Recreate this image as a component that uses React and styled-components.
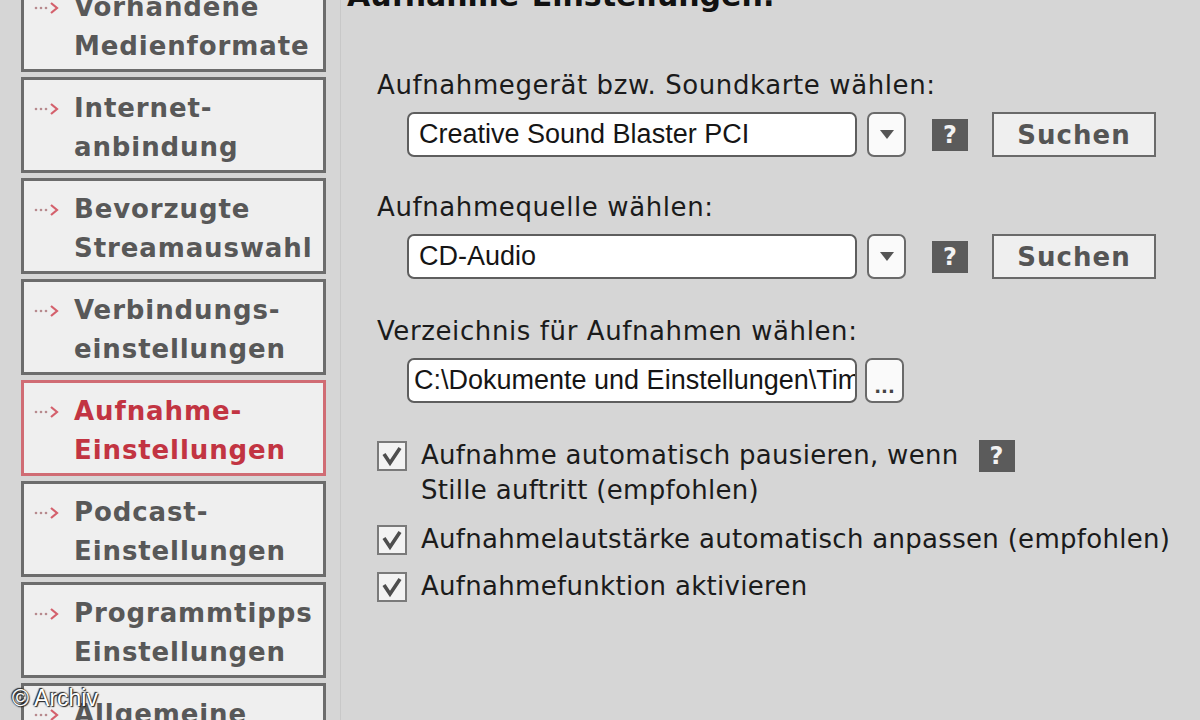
import React from "react";
import styled, { createGlobalStyle } from "styled-components";

const GlobalStyle = createGlobalStyle`
  html, body { margin: 0; padding: 0; }
  body {
    background: #d6d6d6;
    overflow: hidden;
    font-family: "DejaVu Sans", Verdana, sans-serif;
  }
`;

const Page = styled.div`
  position: relative;
  width: 1200px;
  height: 720px;
  overflow: hidden;
  display: flex;
  background: #d6d6d6;
`;

const Sidebar = styled.nav`
  width: 340px;
  flex: none;
  box-sizing: border-box;
  padding-left: 21px;
  margin-top: -24px;
  display: flex;
  flex-direction: column;
  gap: 5px;
`;

const NavItem = styled.div`
  width: 305px;
  height: 96px;
  flex: none;
  box-sizing: border-box;
  border: 3px solid ${(p) => (p.$active ? "#d06c74" : "#6c6c6c")};
  background: #efefef;
  display: flex;
  align-items: flex-start;
  padding: 9px 0 0 9px;
  gap: 13px;
`;

const NavText = styled.div`
  font-family: "DejaVu Sans", Verdana, sans-serif;
  font-weight: bold;
  font-size: 26px;
  line-height: 39px;
  letter-spacing: 0.9px;
  color: ${(p) => (p.$active ? "#c23442" : "#585858")};
  white-space: nowrap;
`;

const ArrowWrap = styled.span`
  flex: none;
  width: 28px;
  height: 39px;
  display: flex;
  align-items: center;
`;

const Arrow = () => (
  <ArrowWrap>
    <svg width="28" height="14" viewBox="0 0 28 14">
      <circle cx="3" cy="7" r="1.3" fill="#b78a8e" />
      <circle cx="8" cy="7" r="1.3" fill="#b78a8e" />
      <circle cx="13" cy="7" r="1.3" fill="#b78a8e" />
      <path d="M18 2 L24 7 L18 12" fill="none" stroke="#d4606c" strokeWidth="2.2" />
    </svg>
  </ArrowWrap>
);

const Main = styled.main`
  flex: 1;
  box-sizing: border-box;
  padding-left: 6px;
  border-left: 1px solid #c8c8c8;
  display: flex;
  flex-direction: column;
`;

const Heading = styled.h1`
  margin: -22px 0 0 0;
  font-family: "DejaVu Sans", Verdana, sans-serif;
  font-weight: bold;
  font-size: 30px;
  line-height: 36px;
  color: #111;
  white-space: nowrap;
`;

const Content = styled.div`
  padding-left: 30px;
  display: flex;
  flex-direction: column;
`;

const Label = styled.div`
  font-family: "DejaVu Sans", Verdana, sans-serif;
  font-size: 26px;
  line-height: 30px;
  letter-spacing: 0.6px;
  color: #1b1b1b;
  margin-top: ${(p) => p.$top}px;
  white-space: nowrap;
`;

const FieldRow = styled.div`
  display: flex;
  align-items: center;
  margin-top: ${(p) => p.$top}px;
  padding-left: 30px;
  height: 45px;
`;

const TextBox = styled.div`
  width: 450px;
  height: 45px;
  box-sizing: border-box;
  border: 2px solid #5e5e5e;
  border-radius: 7px;
  background: #fff;
  display: flex;
  align-items: center;
  padding-left: ${(p) => p.$pad || 10}px;
  overflow: hidden;
  font-family: "Liberation Sans", Arial, sans-serif;
  font-size: 27px;
  color: #151515;
  white-space: nowrap;
`;

const SmallButton = styled.div`
  width: 39px;
  height: 45px;
  box-sizing: border-box;
  border: 2px solid #6a6a6a;
  border-radius: 7px;
  background: #fafafa;
  margin-left: ${(p) => p.$gap || 10}px;
  display: flex;
  align-items: center;
  justify-content: center;
  flex: none;
`;

const HelpBadge = styled.div`
  width: 36px;
  height: 32px;
  background: #5b5b5b;
  color: #f2f2f2;
  font-family: "DejaVu Sans", Verdana, sans-serif;
  font-weight: bold;
  font-size: 24px;
  display: flex;
  align-items: center;
  justify-content: center;
  margin-left: ${(p) => p.$gap || 26}px;
  flex: none;
`;

const SearchButton = styled.div`
  width: 164px;
  height: 45px;
  box-sizing: border-box;
  border: 2px solid #6a6a6a;
  background: #efefef;
  margin-left: 24px;
  display: flex;
  align-items: center;
  justify-content: center;
  font-family: "DejaVu Sans", Verdana, sans-serif;
  font-weight: bold;
  font-size: 26px;
  letter-spacing: 1px;
  color: #555;
  flex: none;
`;

const CheckList = styled.div`
  display: flex;
  flex-direction: column;
  margin-top: 37px;
`;

const CheckRow = styled.div`
  display: flex;
  align-items: flex-start;
  margin-top: ${(p) => p.$top || 0}px;
  gap: 14px;
`;

const Box = styled.div`
  width: 30px;
  height: 30px;
  box-sizing: border-box;
  border: 2px solid #7a7a7a;
  background: #f3f3f3;
  flex: none;
  margin-top: 1px;
  display: flex;
  align-items: center;
  justify-content: center;
`;

const CheckText = styled.div`
  font-family: "DejaVu Sans", Verdana, sans-serif;
  font-size: 26px;
  line-height: 35px;
  letter-spacing: 0.3px;
  color: #1b1b1b;
  white-space: nowrap;
  margin-top: -2px;
`;

const Watermark = styled.div`
  position: absolute;
  left: 12px;
  bottom: 8px;
  font-family: "Liberation Sans", Arial, sans-serif;
  font-size: 23px;
  color: #fff;
  text-shadow: 0 0 2px #222, 1px 1px 1px #222, -1px -1px 1px #222;
`;

const Check = () => (
  <svg width="22" height="22" viewBox="0 0 22 22">
    <path d="M3 9 L9 18 L19 3" fill="none" stroke="#4e4e4e" strokeWidth="3.6" />
  </svg>
);

const DropArrow = () => (
  <svg width="14" height="9" viewBox="0 0 14 9">
    <path d="M0 0 L14 0 L7 9 Z" fill="#555" />
  </svg>
);

const Dots = styled.span`
  font-family: "DejaVu Sans", sans-serif;
  font-weight: bold;
  font-size: 18px;
  color: #444;
  margin-top: 12px;
`;

const navItems = [
  ["Vorhandene", "Medienformate"],
  ["Internet-", "anbindung"],
  ["Bevorzugte", "Streamauswahl"],
  ["Verbindungs-", "einstellungen"],
  ["Aufnahme-", "Einstellungen", true],
  ["Podcast-", "Einstellungen"],
  ["Programmtipps", "Einstellungen"],
  ["Allgemeine", "Einstellungen"],
];

export default function App() {
  return (
    <>
      <GlobalStyle />
      <Page>
        <Sidebar>
          {navItems.map(([a, b, active]) => (
            <NavItem key={a} $active={active}>
              <Arrow />
              <NavText $active={active}>
                {a}
                <br />
                {b}
              </NavText>
            </NavItem>
          ))}
        </Sidebar>
        <Main>
          <Heading>Aufnahme-Einstellungen:</Heading>
          <Content>
            <Label $top={56}>Aufnahmegerät bzw. Soundkarte wählen:</Label>
            <FieldRow $top={12}>
              <TextBox>Creative Sound Blaster PCI</TextBox>
              <SmallButton>
                <DropArrow />
              </SmallButton>
              <HelpBadge>?</HelpBadge>
              <SearchButton>Suchen</SearchButton>
            </FieldRow>
            <Label $top={35}>Aufnahmequelle wählen:</Label>
            <FieldRow $top={12}>
              <TextBox>CD-Audio</TextBox>
              <SmallButton>
                <DropArrow />
              </SmallButton>
              <HelpBadge>?</HelpBadge>
              <SearchButton>Suchen</SearchButton>
            </FieldRow>
            <Label $top={37}>Verzeichnis für Aufnahmen wählen:</Label>
            <FieldRow $top={12}>
              <TextBox $pad={5}>C:\Dokumente und Einstellungen\Tim</TextBox>
              <SmallButton $gap={8}>
                <Dots>...</Dots>
              </SmallButton>
            </FieldRow>
            <CheckList>
              <CheckRow>
                <Box>
                  <Check />
                </Box>
                <CheckText>
                  Aufnahme automatisch pausieren, wenn
                  <br />
                  Stille auftritt (empfohlen)
                </CheckText>
                <HelpBadge $gap={6}>?</HelpBadge>
              </CheckRow>
              <CheckRow $top={16}>
                <Box>
                  <Check />
                </Box>
                <CheckText>Aufnahmelautstärke automatisch anpassen (empfohlen)</CheckText>
              </CheckRow>
              <CheckRow $top={14}>
                <Box>
                  <Check />
                </Box>
                <CheckText>Aufnahmefunktion aktivieren</CheckText>
              </CheckRow>
            </CheckList>
          </Content>
        </Main>
        <Watermark>© Archiv</Watermark>
      </Page>
    </>
  );
}
